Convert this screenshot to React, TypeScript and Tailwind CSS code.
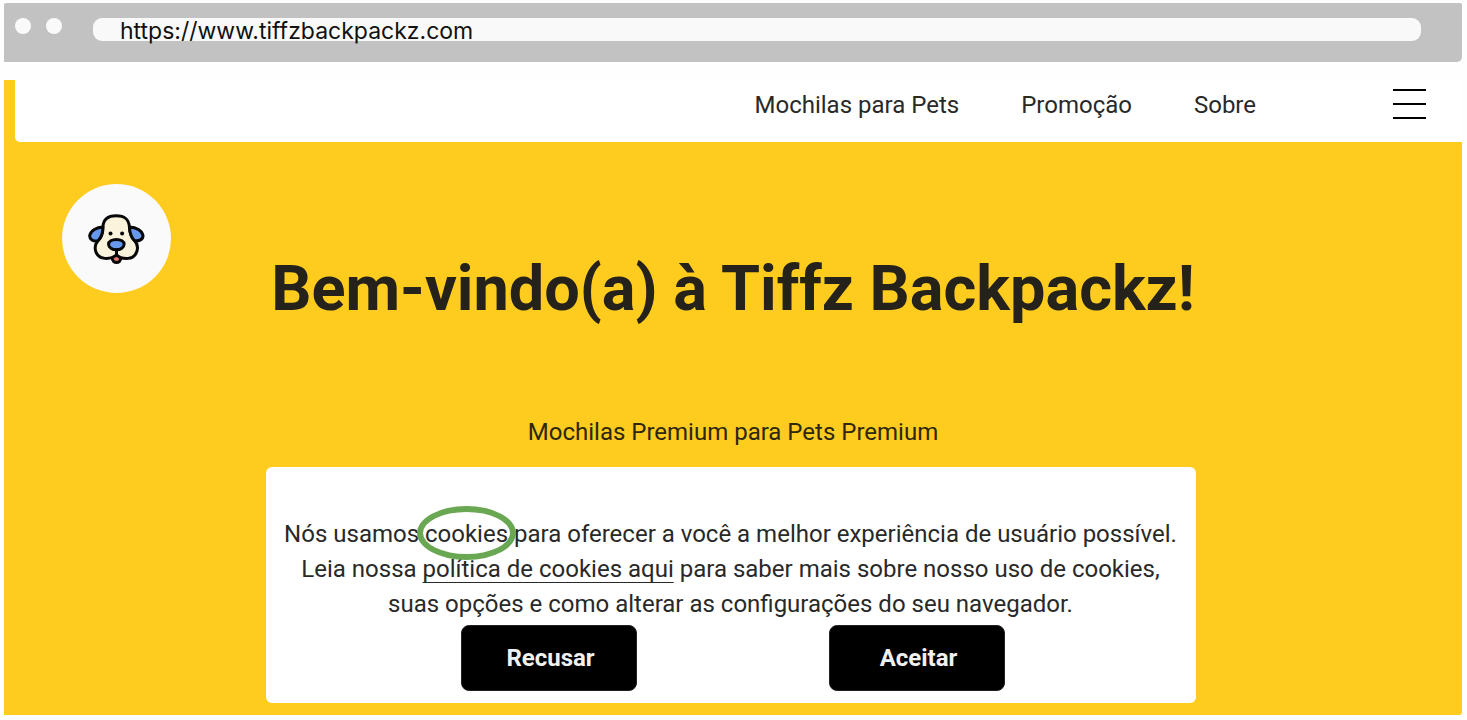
import clsx from "clsx";

const navLinks = ["Mochilas para Pets", "Promoção", "Sobre"];

function BrowserBar() {
  return (
    <div className="flex h-[59px] items-start rounded-t-[2px] rounded-br-[5px] bg-[#c2c2c2] pt-[15px] pr-[41px] pl-[11px]">
      <div className="flex gap-[15px]">
        <span className="h-4 w-4 rounded-full bg-[#fafafa]" />
        <span className="h-4 w-4 rounded-full bg-[#fafafa]" />
      </div>
      <div className="ml-[31px] flex h-[23px] flex-1 items-center rounded-[9px] bg-[#f9f9f9] px-[27px]">
        <input
          type="text"
          aria-label="URL"
          defaultValue="https://www.tiffzbackpackz.com"
          className="h-9 w-full bg-transparent pt-0.5 font-['Inter',sans-serif] text-[23px] text-[#111] outline-none"
        />
      </div>
    </div>
  );
}

function DogLogo() {
  return (
    <svg viewBox="98 115 172 151" className="h-[50px] w-[57px]" stroke="#080808" strokeWidth="9" strokeLinejoin="round" strokeLinecap="round">
      {/* tongue */}
      <path d="M171 240 V248 C171 266 197 266 197 248 V240 Z" fill="#e2746c" />
      {/* head and cheeks */}
      <path
        d="M143 154 C144 130 158 120 183 120 C209 120 221 130 223 154 C224 172 228 184 238 195 C256 213 246 248 219 249 C203 250 191 246 184 238 C176 246 164 250 149 249 C120 247 112 215 128 196 C139 185 143 172 143 154 Z"
        fill="#fcf3dc"
      />
      {/* ears */}
      <path d="M143 154 C124 155 106 165 103 180 C102 191 114 199 128 196 C139 185 143 172 143 154 Z" fill="#6698ee" />
      <path d="M223 154 C244 155 261 165 264 180 C265 191 251 199 238 195 C228 186 224 174 223 154 Z" fill="#6698ee" />
      <circle cx="166" cy="174" r="6" fill="#080808" stroke="none" />
      <circle cx="201" cy="174" r="6" fill="#080808" stroke="none" />
      {/* nose */}
      <path d="M184 192 C197 192 207 198 207 206 C207 216 196 223 184 223 C171 223 160 216 160 206 C160 198 170 192 184 192 Z" fill="#6698ee" />
      <path d="M184 223 V238" fill="none" />
    </svg>
  );
}

function Header() {
  return (
    <header className="mt-[18px] bg-[#fecb1f] pl-[11px]">
      <div className="flex h-[62px] items-center justify-end rounded-bl-[5px] bg-white pr-9">
        <nav className="flex gap-[62px] pt-px pb-3">
          {navLinks.map((link) => (
            <a key={link} href="#" className="text-[24px] leading-[35px] whitespace-nowrap">
              {link}
            </a>
          ))}
        </nav>
        <button type="button" aria-label="Menu" className="mb-3.5 ml-[137px] flex w-[33px] flex-col gap-3">
          <span className="h-0.5 w-full bg-black" />
          <span className="h-0.5 w-full bg-black" />
          <span className="h-0.5 w-full bg-black" />
        </button>
      </div>
    </header>
  );
}

function CookieButton({ label, className }: { label: string; className?: string }) {
  return (
    <button
      type="button"
      className={clsx(
        "h-[66px] w-44 rounded-lg border border-[#222] bg-black pl-1 text-[24px] font-bold text-[#f0f0f0]",
        className
      )}
    >
      {label}
    </button>
  );
}

function CookieBanner() {
  return (
    <section aria-label="Cookies" className="mt-[17px] mr-[5px] w-full max-w-[930px] rounded-[6px] bg-white px-3 pt-[50px] pb-3">
      <p className="text-center text-[24px] leading-[35px]">
        Nós usamos{" "}
        <span className="relative">
          cookies
          <span className="absolute -inset-x-2 -top-3.5 -bottom-3 rounded-[50%] border-[6px] border-[#6aa752]" />
        </span>{" "}
        para oferecer a você a melhor experiência de usuário possível.
        <br />
        Leia nossa{" "}
        <a href="#" className="underline decoration-1 underline-offset-[5px]">
          política de cookies aqui
        </a>{" "}
        para saber mais sobre nosso uso de cookies,
        <br />
        suas opções e como alterar as configurações do seu navegador.
      </p>
      <div className="mt-[3px] flex justify-center gap-48 pl-1">
        <CookieButton label="Recusar" />
        <CookieButton label="Aceitar" />
      </div>
    </section>
  );
}

export default function App() {
  return (
    <div className="min-h-screen bg-[#fefefe] pt-[3px] pr-[5px] pb-[5px] pl-1 font-['Roboto',sans-serif] text-[#292929]">
      <BrowserBar />
      <Header />
      <main className="flex flex-col items-center rounded-br-[3px] bg-[#fecb1f] pb-3">
        <div className="grid w-full grid-cols-[1fr_auto_1fr] items-start">
          <div className="mt-[42px] ml-[58px] flex h-[109px] w-[109px] items-center justify-center rounded-full bg-[#fafafa]">
            <DogLogo />
          </div>
          <h1 className="mt-[115px] text-[63px] leading-[64px] font-bold whitespace-nowrap text-[#24221a]">
            Bem-vindo(a) à Tiffz Backpackz!
          </h1>
        </div>
        <p className="mt-[94px] text-[24px] leading-[35px] text-[#2d2710]">Mochilas Premium para Pets Premium</p>
        <CookieBanner />
      </main>
    </div>
  );
}
